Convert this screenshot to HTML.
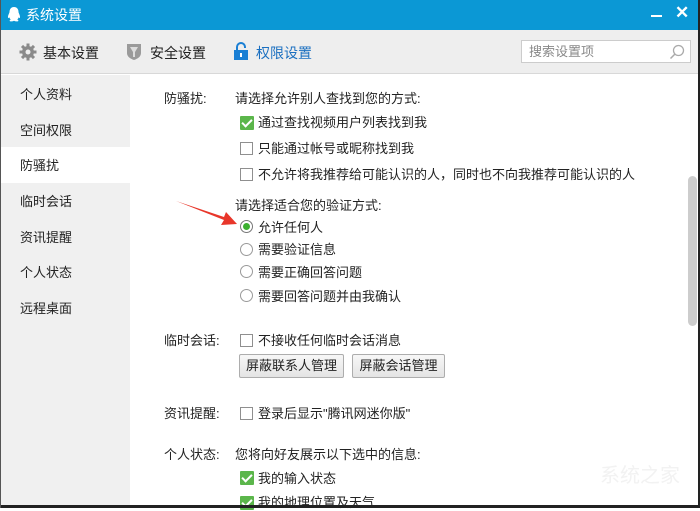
<!DOCTYPE html><html><head><meta charset="utf-8"><style>
*{margin:0;padding:0;box-sizing:border-box}
body{width:700px;height:508px;overflow:hidden;font-family:"Liberation Sans","Noto Sans CJK SC",sans-serif;font-size:13px;color:#222;background:#fff;position:relative}
.a{position:absolute;white-space:nowrap;line-height:16px}
.t{margin-top:1px}
.cb{position:absolute;width:13px;height:13px;border:1px solid #8f8f8f;background:#fff}
.ck{position:absolute;width:14px;height:14px;background:#5bb64b;border-radius:1px}
.ck:after{content:"";position:absolute;left:4px;top:1px;width:4px;height:8px;border:solid #fff;border-width:0 2px 2px 0;transform:rotate(45deg)}
.rd{position:absolute;width:13px;height:13px;border:1px solid #9a9a9a;border-radius:50%;background:#fff}
.btn{position:absolute;height:24px;border:1px solid #adadad;background:linear-gradient(#f7f7f7,#e4e4e4);border-radius:2px;text-align:center;line-height:22px}
.sb{position:absolute;left:20px}
</style></head><body>
<div style="position:absolute;left:0;top:0;width:700px;height:30px;background:#0b98d5"></div>
<svg class="a" style="left:5px;top:6px" width="18" height="18" viewBox="0 0 18 18"><path d="M9 1c-3 0-4.5 2.3-4.5 5 0 1-1.8 3.5-1.5 5.5.3 1 1 .3 1.3-.3.3 1 .8 1.7 1.5 2.3-1 .4-1.5 1-1 1.6.8.6 3.2.3 4.2-.4 1 .7 3.4 1 4.2.4.5-.6 0-1.2-1-1.6.7-.6 1.2-1.3 1.5-2.3.3.6 1 1.3 1.3.3.3-2-1.5-4.5-1.5-5.5 0-2.7-1.5-5-4.5-5z" fill="#fff"/></svg>
<div class="a" style="left:26px;top:7px;color:#fff;font-size:14px">系统设置</div>
<div style="position:absolute;left:651px;top:15px;width:11px;height:2px;background:#fff"></div>
<div class="a" style="left:675px;top:5px;color:#fff;font-size:17px;font-weight:bold">✕</div>
<div style="position:absolute;left:0;top:30px;width:700px;height:44px;background:#eeeeee;border-bottom:1px solid #d8d8d8"></div>
<svg class="a" style="left:19px;top:43px" width="18" height="18" viewBox="0 0 18 18"><g fill="#8a8a8a"><circle cx="9" cy="9" r="6"/><rect x="7.5" y="0.5" width="3" height="17"/><rect x="0.5" y="7.5" width="17" height="3"/><rect x="7.5" y="0.5" width="3" height="17" transform="rotate(45 9 9)"/><rect x="7.5" y="0.5" width="3" height="17" transform="rotate(-45 9 9)"/></g><circle cx="9" cy="9" r="2.5" fill="#eee"/></svg>
<div class="a" style="left:43px;top:45px;font-size:14px">基本设置</div>
<svg class="a" style="left:126px;top:43px" width="16" height="18" viewBox="0 0 16 18"><path d="M1 1h14v9c0 4-4 6-7 7-3-1-7-3-7-7z" fill="#9a9a9a"/><path d="M4 4h8l-3 5v5h-2v-5z" fill="#ddd"/></svg>
<div class="a" style="left:150px;top:45px;font-size:14px">安全设置</div>
<svg class="a" style="left:233px;top:42px" width="16" height="19" viewBox="0 0 16 19"><path d="M4 8V5a4 4 0 0 1 8 0v1" stroke="#1a7fd4" stroke-width="2" fill="none"/><rect x="1" y="8" width="14" height="10" fill="#1a7fd4"/><rect x="7" y="11" width="2" height="4" fill="#fff"/></svg>
<div class="a" style="left:256px;top:45px;font-size:14px;color:#1a6fc0">权限设置</div>
<div style="position:absolute;left:521px;top:40px;width:170px;height:23px;border:1px solid #ccc;background:#fff"></div>
<div class="a" style="left:529px;top:44px;color:#888">搜索设置项</div>
<svg class="a" style="left:669px;top:44px" width="16" height="16" viewBox="0 0 16 16"><circle cx="9.5" cy="6.5" r="5" stroke="#aaa" stroke-width="1.3" fill="none"/><path d="M6 10l-4.5 4.5" stroke="#aaa" stroke-width="1.5"/></svg>
<div style="position:absolute;left:0;top:75px;width:130px;height:433px;background:#f0f0f0"></div>
<div style="position:absolute;left:0;top:147px;width:130px;height:36px;background:#fff"></div>
<div class="a sb t" style="top:86px">个人资料</div>
<div class="a sb t" style="top:122px">空间权限</div>
<div class="a sb t" style="top:157px">防骚扰</div>
<div class="a sb t" style="top:193px">临时会话</div>
<div class="a sb t" style="top:229px">资讯提醒</div>
<div class="a sb t" style="top:264px">个人状态</div>
<div class="a sb t" style="top:300px">远程桌面</div>
<div class="a t" style="left:164px;top:90px">防骚扰:</div>
<div class="a t" style="left:235px;top:90px">请选择允许别人查找到您的方式:</div>
<div class="ck" style="left:240px;top:116px"></div><div class="a t" style="left:258px;top:114px">通过查找视频用户列表找到我</div>
<div class="cb" style="left:240px;top:142px"></div><div class="a t" style="left:258px;top:140px">只能通过帐号或昵称找到我</div>
<div class="cb" style="left:240px;top:168px"></div><div class="a t" style="left:258px;top:166px">不允许将我推荐给可能认识的人，同时也不向我推荐可能认识的人</div>
<div class="a t" style="left:235px;top:197px">请选择适合您的验证方式:</div>
<div class="rd" style="left:240px;top:220px;border-color:#777"><div style="position:absolute;left:2px;top:2px;width:7px;height:7px;border-radius:50%;background:#3cb030"></div></div><div class="a t" style="left:258px;top:219px">允许任何人</div>
<div class="rd" style="left:240px;top:243px"></div><div class="a t" style="left:258px;top:241px">需要验证信息</div>
<div class="rd" style="left:240px;top:265px"></div><div class="a t" style="left:258px;top:264px">需要正确回答问题</div>
<div class="rd" style="left:240px;top:289px"></div><div class="a t" style="left:258px;top:288px">需要回答问题并由我确认</div>
<svg class="a" style="left:175px;top:198px" width="65" height="32" viewBox="0 0 65 32"><path d="M1 3l48 19-3 5 16-1-11-12-2 5z" fill="#e8362a"/></svg>
<div class="a t" style="left:164px;top:332px">临时会话:</div>
<div class="cb" style="left:240px;top:334px"></div><div class="a t" style="left:258px;top:332px">不接收任何临时会话消息</div>
<div class="btn" style="left:239px;top:354px;width:105px">屏蔽联系人管理</div>
<div class="btn" style="left:352px;top:354px;width:93px">屏蔽会话管理</div>
<div class="a t" style="left:164px;top:405px">资讯提醒:</div>
<div class="cb" style="left:240px;top:407px"></div><div class="a t" style="left:258px;top:405px">登录后显示"腾讯网迷你版"</div>
<div class="a t" style="left:164px;top:446px">个人状态:</div>
<div class="a t" style="left:235px;top:446px">您将向好友展示以下选中的信息:</div>
<div class="ck" style="left:240px;top:471px"></div><div class="a t" style="left:258px;top:470px">我的输入状态</div>
<div class="ck" style="left:240px;top:496px"></div><div class="a t" style="left:258px;top:494px">我的地理位置及天气</div>
<div style="position:absolute;left:688px;top:176px;width:9px;height:150px;border-radius:5px;background:#cdcdcd"></div>
<div class="a" style="left:600px;top:468px;color:#f2f2f2;font-size:20px">系统之家</div>
<div style="position:absolute;left:0;top:505px;width:700px;height:3px;background:#222"></div>
<div style="position:absolute;left:698px;top:0;width:2px;height:508px;background:#222"></div>
<div style="position:absolute;left:0;top:0;width:1px;height:508px;background:#555"></div>
</body></html>
